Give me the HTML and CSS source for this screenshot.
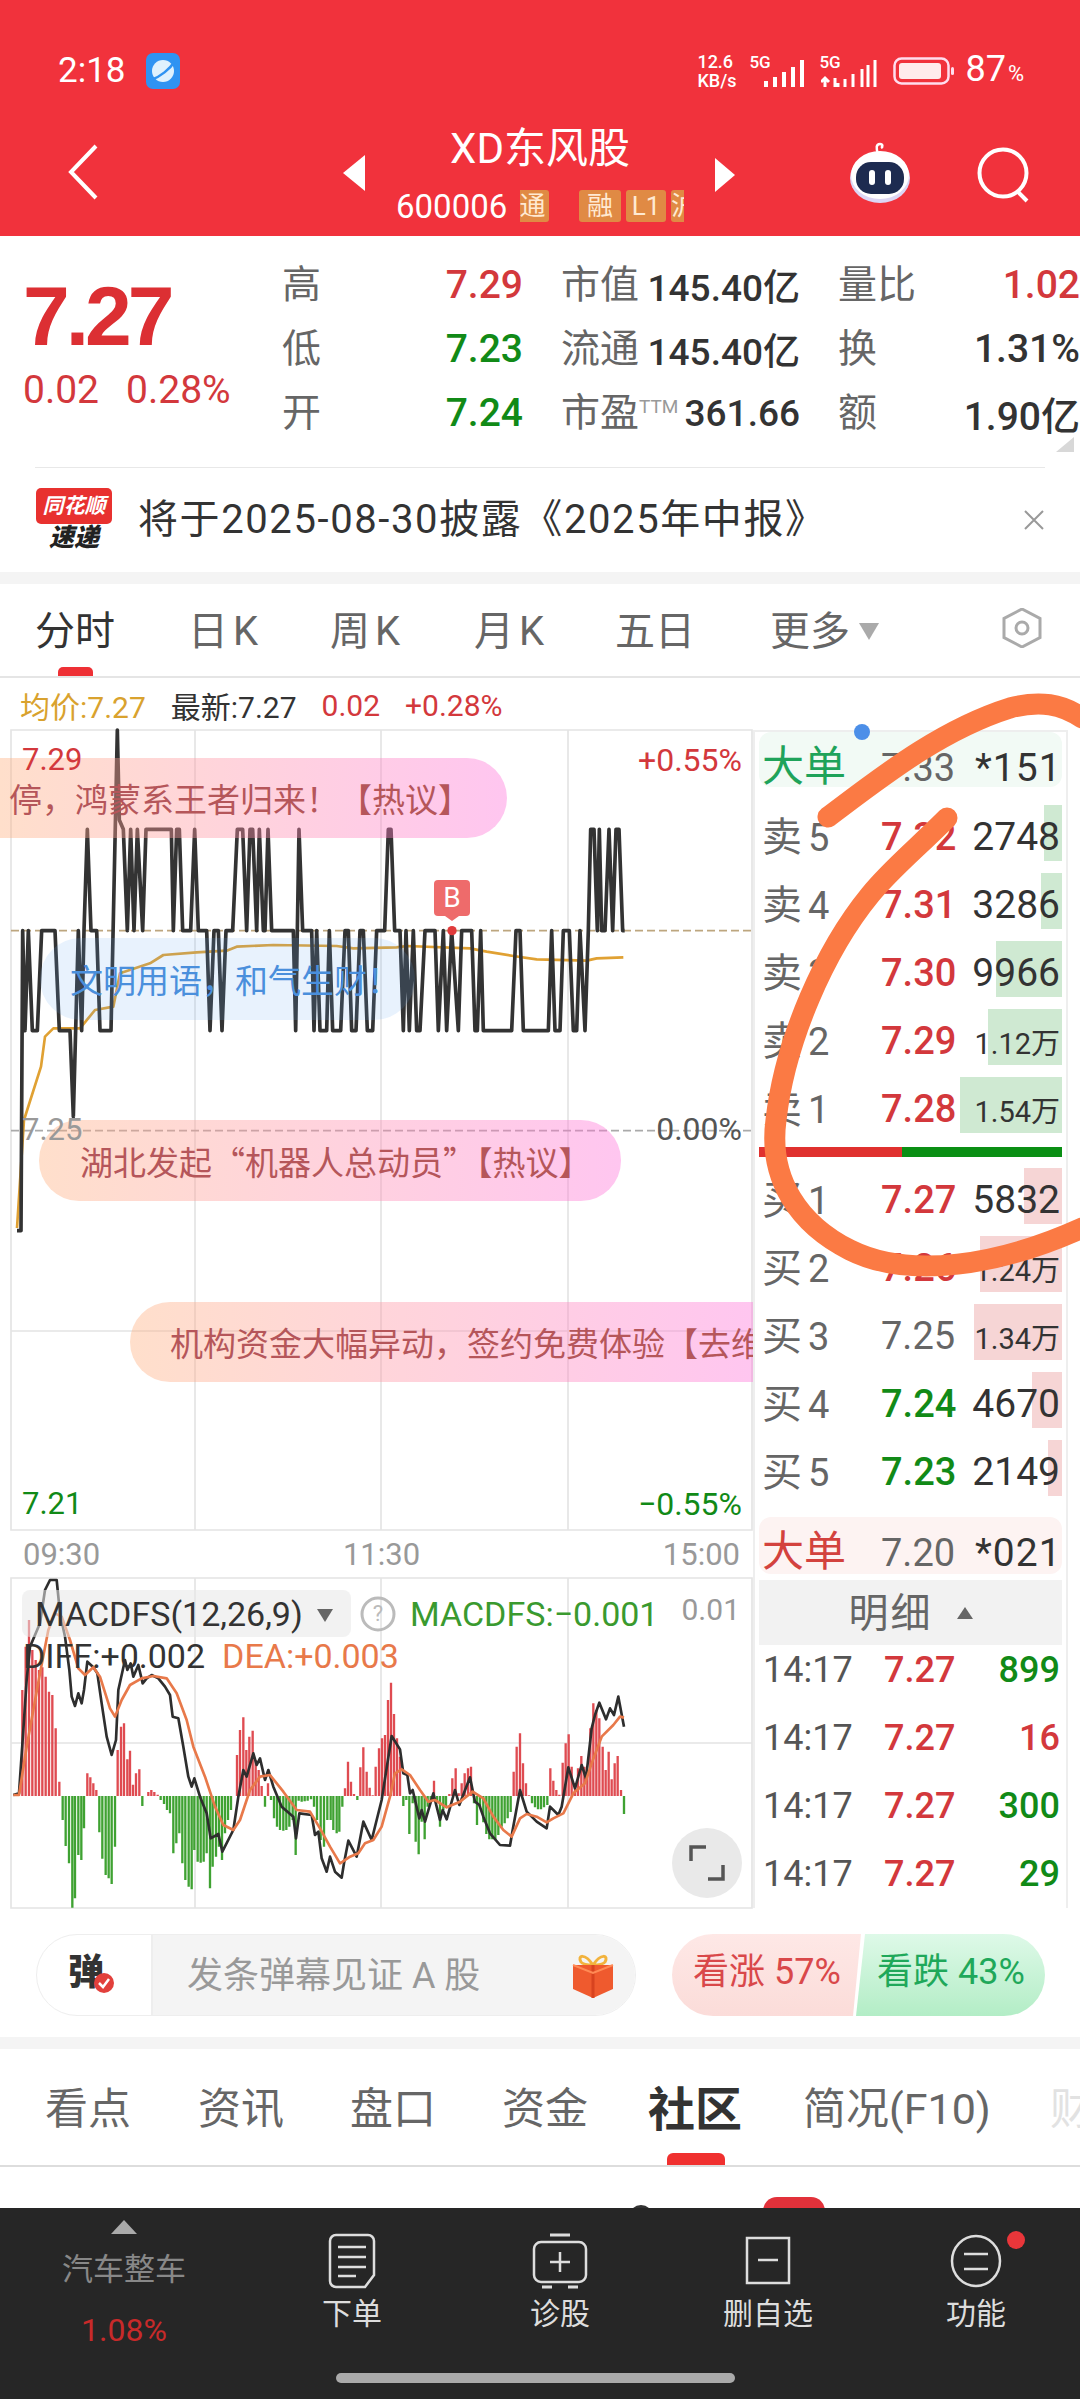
FILE: index.html
```html
<!DOCTYPE html>
<html lang="zh-CN">
<head>
    <meta charset="UTF-8">
    <title>XD东风股</title>
    <link rel="stylesheet" href="styles.css">
</head>
<body>
<div class="page">

    <div class="top">
        <div class="status">
            <span class="clock">2:18</span>
            <svg class="app-dot" width="34" height="36" viewBox="0 0 34 36"><rect width="34" height="36" rx="7" fill="#2f93f2"/><circle cx="17" cy="18" r="11" fill="#dff1fd"/><path d="M5 27 C14 24 24 16 29 8" stroke="#2f93f2" stroke-width="2.5" fill="none"/></svg>
            <div class="status-right">
                <span class="net">12.6<br>KB/s</span>
                <span class="sim"><span class="sim-g">5G</span><svg width="44" height="28" viewBox="0 0 44 28"><path d="M3 28V22M12 28V18M21 28V13M30 28V8M39 28V1" stroke="#fff" stroke-width="4"/></svg></span>
                <span class="sim sim-two"><span class="sim-g">5G</span><svg width="58" height="28" viewBox="0 0 58 28"><path d="M4 28V20M0 23L4 19L8 23M14 19V28M17 28V24M24 28V20M32 28V15M41 28V10M47 28V6M54 28V1" stroke="#fff" stroke-width="3" fill="none"/></svg></span>
                <svg class="battery" width="62" height="28" viewBox="0 0 62 28"><rect x="1.5" y="1.5" width="54" height="25" rx="7" fill="none" stroke="#fde" stroke-width="2.5"/><rect x="6" y="6" width="42" height="16" rx="3" fill="#ffecec"/><rect x="58" y="10" width="3" height="8" rx="1.5" fill="#fde"/></svg>
                <span class="pct">87<small>%</small></span>
            </div>
        </div>
        <div class="nav">
            <svg class="back" width="30" height="56" viewBox="0 0 30 56"><path d="M28 2L3 28L28 54" fill="none" stroke="#fff" stroke-width="4"/></svg>
            <span class="tri-left"></span>
            <div class="nav-center">
                <div class="title">XD东风股</div>
                <div class="sub">
                    <span class="code">600006</span>
                    <span class="tag tag-tong"><span>通</span></span>
                    <span class="tag tag-rong">融</span>
                    <span class="tag tag-l1">L1</span>
                    <span class="tag tag-cut">沪</span>
                </div>
            </div>
            <span class="tri-right"></span>
            <svg class="robot" width="64" height="62" viewBox="0 0 64 62"><path d="M30 12C28 6 28 2 32 2C35 2 35 5 33 6" fill="none" stroke="#fff" stroke-width="2.5"/><ellipse cx="32" cy="36" rx="30" ry="25" fill="#dcd6f5"/><ellipse cx="32" cy="33" rx="29" ry="24" fill="#fff"/><rect x="8" y="20" width="48" height="32" rx="15" fill="#1d2b50"/><rect x="21" y="28" width="6" height="15" rx="3" fill="#fff"/><rect x="37" y="28" width="6" height="15" rx="3" fill="#fff"/></svg>
            <svg class="search" width="54" height="56" viewBox="0 0 54 56"><circle cx="26" cy="26" r="23.5" fill="none" stroke="#fff" stroke-width="4"/><path d="M40 44L50 54" stroke="#fff" stroke-width="4"/></svg>
        </div>
    </div>

    <div class="quote">
        <div class="now">
            <div class="now-price">7.27</div>
            <div class="now-change"><span>0.02</span><span>0.28%</span></div>
        </div>
        <div class="stats">
            <div class="stat"><span class="k">高</span><span class="v up">7.29</span></div>
            <div class="stat"><span class="k">市值</span><span class="m">145.40亿</span></div>
            <div class="stat"><span class="k">量比</span><span class="v up">1.02</span></div>
            <div class="stat"><span class="k">低</span><span class="v down">7.23</span></div>
            <div class="stat"><span class="k">流通</span><span class="m">145.40亿</span></div>
            <div class="stat"><span class="k">换</span><span class="m wide">1.31%</span></div>
            <div class="stat"><span class="k">开</span><span class="v down">7.24</span></div>
            <div class="stat"><span class="k">市盈<sup>TTM</sup></span><span class="m">361.66</span></div>
            <div class="stat"><span class="k">额</span><span class="m wide">1.90亿</span></div>
        </div>
        <span class="corner"></span>
    </div>

    <div class="news">
        <div class="news-logo">
            <div class="news-bubble">同花顺</div>
            <div class="news-word">速递</div>
        </div>
        <div class="news-text">将于2025-08-30披露《2025年中报》</div>
        <svg class="news-close" width="22" height="22" viewBox="0 0 22 22"><path d="M2 2L20 20M20 2L2 20" stroke="#999" stroke-width="2"/></svg>
    </div>

    <div class="gap"></div>

    <div class="periods">
        <span class="period on">分时</span>
        <span class="period">日 K</span>
        <span class="period">周 K</span>
        <span class="period">月 K</span>
        <span class="period">五日</span>
        <span class="period">更多<i class="more-tri"></i></span>
        <svg class="hex" width="42" height="40" viewBox="0 0 42 40"><path d="M21 1L39 10.5V29.5L21 39L3 29.5V10.5Z" fill="none" stroke="#aaa" stroke-width="3"/><circle cx="21" cy="20" r="6" fill="none" stroke="#aaa" stroke-width="3"/></svg>
        <i class="period-bar"></i>
    </div>

    <div class="legend">
        <span class="avg">均价:7.27</span>
        <span class="last">最新:7.27</span>
        <span class="up">0.02</span>
        <span class="up">+0.28%</span>
    </div>

    <div class="board">
        <div class="chart-col">
            <div class="price-chart">
                <svg class="plot" width="743" height="800" viewBox="0 -270 2229 2400">
                    <g class="grid">
                        <path d="M3 -270V2130H2226V-270ZM555 -270V2130M1113 -270V2130M1674 -270V2130M3 1533H2226"/>
                    </g>
                    <path class="mid-dash" d="M3 332H2226"/>
                    <path class="zero-dash" d="M3 932H2226"/>
                    <polyline class="avg-line" points="21,1224 42,900 93,740 105,650 130,625 210,625 255,570 310,560 320,510 330,460 420,430 460,405 560,397 650,392 680,380 790,375 980,378 1030,385 1160,382 1190,378 1380,385 1430,395 1510,408 1580,418 1730,422 1760,415 1840,412"/>
                    <polyline class="price-line" points="21,1232 33,1232 38,332 45,632 55,332 67,632 82,632 95,332 135,332 148,632 180,632 190,890 205,332 215,632 222,332 232,28 243,332 260,332 270,632 303,632 322,-270 328,0 340,28 352,332 362,28 372,332 382,28 398,332 408,28 484,28 490,332 500,28 508,28 518,332 542,332 554,28 565,332 590,332 600,632 612,332 625,332 636,632 648,332 668,332 682,28 698,28 710,332 720,28 728,28 740,332 748,28 760,332 765,332 774,28 785,332 850,332 857,632 862,332 867,28 878,332 905,332 912,632 920,332 930,632 950,632 958,332 968,632 992,632 1005,332 1015,332 1025,632 1038,632 1050,332 1060,332 1072,632 1088,632 1100,332 1124,332 1135,28 1143,28 1154,332 1170,332 1180,632 1188,332 1198,632 1210,332 1220,632 1230,632 1245,332 1275,332 1285,632 1300,332 1310,632 1325,332 1345,632 1355,332 1385,332 1395,632 1402,632 1412,332 1420,632 1505,632 1518,332 1530,332 1540,632 1615,632 1625,332 1635,632 1650,632 1660,332 1678,332 1690,632 1700,632 1710,332 1725,632 1735,332 1742,28 1752,28 1762,332 1768,28 1775,332 1785,332 1797,28 1808,332 1818,28 1827,28 1838,332 1844,332"/>
                    <circle cx="1326" cy="332" r="14" fill="#e03b3b"/>
                </svg>
                <div class="pill pill-one"><span>停，鸿蒙系王者归来！【热议】</span></div>
                <div class="pill pill-blue"><span>文明用语，和气生财！</span></div>
                <div class="pill pill-three"><span>湖北发起“机器人总动员”【热议】</span></div>
                <div class="pill pill-four"><span>机构资金大幅异动，签约免费体验【去维</span></div>
                <span class="axis-num num-high">7.29</span>
                <span class="axis-num num-pct-high">+0.55%</span>
                <span class="axis-num num-mid">7.25</span>
                <span class="axis-num num-pct-mid">0.00%</span>
                <span class="axis-num num-low">7.21</span>
                <span class="axis-num num-pct-low">−0.55%</span>
                <span class="trade-mark">B</span>
            </div>
            <div class="times"><span>09:30</span><span>11:30</span><span>15:00</span></div>
            <div class="macd">
                <svg class="plot" width="743" height="332" viewBox="0 -6 2229 996">
                    <g class="grid">
                        <path d="M3 -6V984H2226V-6ZM555 -6V984M1113 -6V984M1674 -6V984M3 489H2226"/>
                    </g>
                    <path class="bars-red" d="M37 648V330M47 648V200M57 648V120M67 648V210M77 648V240M87 648V270M97 648V262M107 648V290M117 648V335M127 648V345M137 648V445M148 648V605M232 648V580M241 648V592M250 648V610M259 648V630M323 648V510M333 648V440M342 648V430M352 648V538M360 648V512M369 648V614M378 648V580M388 648V568M415 648V636M424 648V630M433 648V636M443 648V644M681 648V525M690 648V450M700 648V412M709 648V510M718 648V470M728 648V452M737 648V540M746 648V570M755 648V618M774 648V610"/>
                    <path class="bars-green" d="M158 648V720M167 648V798M177 648V850M187 648V983M195 648V955M205 648V825M214 648V840M222 648V745M268 648V757M277 648V836M287 648V885M296 648V895M305 648V912M315 648V800M397 648V678M452 648V660M462 648V672M471 648V690M480 648V700M490 648V820M499 648V790M508 648V760M517 648V850M526 648V900M536 648V920M545 648V928M553 648V810M563 648V845M572 648V848M581 648V845M590 648V820M600 648V925M608 648V860M618 648V830M627 648V800M636 648V840M645 648V760M654 648V720M663 648V690M765 648V680M783 648V660M792 648V715M801 648V740M810 648V750M820 648V752M829 648V750M838 648V740M848 648V720M857 648V825M866 648V662M875 648V665M884 648V664M893 648V662M903 648V658M912 648V680M921 648V720"/>
                    <g transform="translate(930,210)">
                        <path class="bars-red" d="M75 438V415M84 438V335M93 438V395M102 438V432M121 438V352M130 438V292M140 438V365M149 438V413M158 438V436M167 438V350M177 438V295M186 438V265M195 438V255M204 438V150M213 438V98M222 438V192M231 438V265M240 438V320M342 438V392M388 438V432M397 438V385M407 438V355M416 438V430M425 438V400M434 438V370M444 438V355M453 438V350M581 438V365M590 438V290M600 438V250M609 438V340M618 438V400M627 438V436M691 438V355M700 438V392M709 438V420M718 438V434M728 438V338M737 438V280M746 438V253M755 438V350M765 438V400M774 438V355M784 438V318M793 438V350M802 438V370M811 438V235M820 438V160M829 438V180M838 438V205M848 438V290M857 438V360M866 438V305M875 438V388M884 438V340M893 438V318M903 438V420"/>
                        <path class="bars-green" d="M2 438V570M12 438V590M22 438V510M32 438V510M40 438V540M50 438V550M58 438V545M67 438V470M112 438V450M250 438V468M259 438V450M268 438V552M278 438V460M287 438V575M296 438V613M305 438V515M314 438V568M323 438V470M332 438V450M351 438V460M360 438V530M370 438V480M378 438V470M462 438V460M471 438V525M480 438V470M490 438V517M499 438V552M508 438V568M517 438V568M526 438V570M535 438V555M545 438V530M554 438V520M563 438V505M572 438V486M636 438V460M645 438V472M654 438V478M663 438V478M672 438V472M682 438V465M912 438V492"/>
                    </g>
                    <polyline class="diff-line" points="10,645 27,640 40,450 50,300 60,200 90,130 105,30 120,0 140,0 150,100 165,170 178,270 185,350 195,378 205,340 215,370 222,330 232,245 250,262 262,280 275,370 290,470 305,525 318,480 325,330 345,240 352,270 362,250 370,290 385,255 398,310 410,295 425,285 445,295 465,320 480,345 488,410 505,415 520,500 535,590 545,620 553,595 570,650 590,700 602,775 625,762 637,815 670,750 685,650 700,570 710,590 730,520 740,555 750,535 765,600 775,570 790,620 815,680 850,710 858,775 868,700 905,705 915,765 925,755 935,835 950,875 960,830 975,875 995,893 1002,850 1015,782 1040,830 1060,725 1085,780 1100,720 1115,660 1145,468 1170,508 1180,580 1192,585 1200,640 1208,630 1228,715 1235,690 1245,725 1270,640 1290,720 1298,690 1310,718 1335,630 1348,675 1380,592 1395,665 1408,675 1420,710 1440,760 1470,795 1500,797 1508,750 1530,630 1550,695 1580,725 1610,745 1620,680 1645,705 1655,680 1675,562 1695,625 1715,555 1728,595 1745,445 1755,405 1768,368 1788,418 1800,385 1812,405 1825,350 1842,440"/>
                    <polyline class="dea-line" points="10,645 27,645 50,500 90,280 115,150 135,100 155,110 180,180 205,265 225,285 250,262 270,290 300,385 315,410 335,360 360,315 395,295 430,288 470,295 500,340 530,420 550,500 585,590 615,680 640,735 670,750 690,720 720,630 750,590 780,585 820,635 860,690 900,695 930,745 960,800 990,850 998,845 1020,830 1045,820 1065,790 1090,780 1115,740 1140,650 1155,580 1175,568 1200,585 1230,630 1255,665 1275,660 1310,682 1350,665 1388,635 1420,655 1450,710 1480,750 1505,770 1530,715 1550,702 1580,710 1610,727 1630,715 1660,700 1690,640 1725,610 1745,550 1775,470 1810,435 1830,410 1842,413"/>
                </svg>
                <div class="macd-chip">MACDFS(12,26,9)<i class="chip-tri"></i></div>
                <svg class="help" width="36" height="36" viewBox="0 0 36 36"><circle cx="18" cy="18" r="16" fill="none" stroke="#bbb" stroke-width="3"/><text x="18" y="25" text-anchor="middle" font-size="22" fill="#bbb" font-family="Roboto">?</text></svg>
                <span class="macd-val">MACDFS:−0.001</span>
                <span class="macd-scale">0.01</span>
                <div class="macd-lines"><span class="diff">DIFF:+0.002</span><span class="dea">DEA:+0.003</span></div>
                <div class="expand">
                    <svg width="36" height="36" viewBox="0 0 36 36"><path d="M2 16V2H17M34 20V34H19" fill="none" stroke="#555" stroke-width="3.5"/></svg>
                </div>
            </div>
        </div>

        <div class="book">
            <div class="big-row big-buy"><span class="big-name">大单</span><span class="price flat">7.33</span><span class="big-vol">*151</span><i class="blue-dot"></i></div>
            <div class="side sell">
                <div class="row"><i class="bar" style="width:18px"></i><span class="row-name"><b>卖</b>5</span><span class="price up">7.32</span><span class="vol">2748</span></div>
                <div class="row"><i class="bar" style="width:21px"></i><span class="row-name"><b>卖</b>4</span><span class="price up">7.31</span><span class="vol">3286</span></div>
                <div class="row"><i class="bar" style="width:66px"></i><span class="row-name"><b>卖</b>3</span><span class="price up">7.30</span><span class="vol">9966</span></div>
                <div class="row"><i class="bar" style="width:74px"></i><span class="row-name"><b>卖</b>2</span><span class="price up">7.29</span><span class="vol small">1.12万</span></div>
                <div class="row"><i class="bar" style="width:102px"></i><span class="row-name"><b>卖</b>1</span><span class="price up">7.28</span><span class="vol small">1.54万</span></div>
            </div>
            <div class="split"><i class="split-red"></i><i class="split-green"></i></div>
            <div class="side buy">
                <div class="row"><i class="bar" style="width:38px"></i><span class="row-name"><b>买</b>1</span><span class="price up">7.27</span><span class="vol">5832</span></div>
                <div class="row"><i class="bar" style="width:82px"></i><span class="row-name"><b>买</b>2</span><span class="price up">7.26</span><span class="vol small">1.24万</span></div>
                <div class="row"><i class="bar" style="width:88px"></i><span class="row-name"><b>买</b>3</span><span class="price flat">7.25</span><span class="vol small">1.34万</span></div>
                <div class="row"><i class="bar" style="width:30px"></i><span class="row-name"><b>买</b>4</span><span class="price down">7.24</span><span class="vol">4670</span></div>
                <div class="row"><i class="bar" style="width:14px"></i><span class="row-name"><b>买</b>5</span><span class="price down">7.23</span><span class="vol">2149</span></div>
            </div>
            <div class="big-row big-sell"><span class="big-name">大单</span><span class="price flat">7.20</span><span class="big-vol">*021</span></div>
            <div class="detail-head">明细<i class="detail-tri"></i></div>
            <div class="trades">
                <div class="trade"><span class="t-time">14:17</span><span class="t-price">7.27</span><span class="t-vol down">899</span></div>
                <div class="trade"><span class="t-time">14:17</span><span class="t-price">7.27</span><span class="t-vol up">16</span></div>
                <div class="trade"><span class="t-time">14:17</span><span class="t-price">7.27</span><span class="t-vol down">300</span></div>
                <div class="trade"><span class="t-time">14:17</span><span class="t-price">7.27</span><span class="t-vol down">29</span></div>
            </div>
        </div>
    </div>

    <div class="danmu-row">
        <div class="danmu">
            <div class="danmu-badge"><b>弹</b>
                <svg class="danmu-check" width="20" height="20" viewBox="0 0 20 20"><circle cx="10" cy="10" r="10" fill="#e2403c"/><path d="M5 10L9 14L15 6" fill="none" stroke="#fff" stroke-width="2.5"/></svg>
            </div>
            <div class="danmu-input">
                <span>发条弹幕见证 A 股</span>
                <svg width="44" height="48" viewBox="0 0 44 48"><path d="M22 14C14 2 6 4 10 11C12 14 18 14 22 14C26 14 32 14 34 11C38 4 30 2 22 14Z" fill="none" stroke="#f2b33d" stroke-width="3"/><path d="M2 14H42V38L22 47L2 38Z" fill="#ef5a2e"/><path d="M22 14V47" stroke="#d8431f" stroke-width="3"/><path d="M2 14L22 22L42 14" fill="none" stroke="#ff8a55" stroke-width="2"/></svg>
            </div>
        </div>
        <div class="vote">
            <span class="vote-up">看涨 57%</span>
            <span class="vote-down">看跌 43%</span>
        </div>
    </div>

    <div class="gap"></div>

    <div class="tabs">
        <span class="tab">看点</span>
        <span class="tab">资讯</span>
        <span class="tab">盘口</span>
        <span class="tab">资金</span>
        <span class="tab on">社区</span>
        <span class="tab">简况(F10)</span>
        <span class="tab faded">财</span>
        <i class="tab-bar"></i>
    </div>

    <div class="feed">
        <i class="feed-dot"></i>
        <i class="feed-badge"></i>
    </div>

    <div class="dock">
        <div class="dock-sector">
            <i class="dock-tri"></i>
            <span class="sector-name">汽车整车</span>
            <span class="sector-pct">1.08%</span>
        </div>
        <div class="dock-item">
            <svg width="48" height="56" viewBox="0 0 48 56"><path d="M8 2H40A6 6 0 0 1 46 8V42L37 54H8A6 6 0 0 1 2 48V8A6 6 0 0 1 8 2Z" fill="none" stroke="#ddd" stroke-width="2.5"/><path d="M10 14H38M10 24H38M10 34H38M10 43H28" stroke="#ddd" stroke-width="2.5"/></svg>
            <span>下单</span>
        </div>
        <div class="dock-item">
            <svg width="56" height="56" viewBox="0 0 56 56"><path d="M18 2H38" stroke="#ddd" stroke-width="3"/><rect x="2" y="9" width="52" height="40" rx="7" fill="none" stroke="#ddd" stroke-width="2.5"/><path d="M28 19V39M18 29H38" stroke="#ddd" stroke-width="2.5"/><path d="M10 54H20M36 54H46" stroke="#ddd" stroke-width="3"/></svg>
            <span>诊股</span>
        </div>
        <div class="dock-item">
            <svg width="46" height="56" viewBox="0 0 46 56"><rect x="2" y="5" width="42" height="45" fill="none" stroke="#ddd" stroke-width="2.5"/><path d="M13 27H33" stroke="#ddd" stroke-width="2.5"/></svg>
            <span>删自选</span>
        </div>
        <div class="dock-item">
            <svg width="52" height="56" viewBox="0 0 52 56"><ellipse cx="26" cy="28" rx="24" ry="25" fill="none" stroke="#ddd" stroke-width="2.5"/><path d="M14 21H38M14 36H38" stroke="#ddd" stroke-width="2.5"/></svg>
            <span>功能</span>
            <i class="dock-dot"></i>
        </div>
        <i class="home-bar"></i>
    </div>

    <svg class="scribble" width="1080" height="800" viewBox="0 600 1080 800">
        <path d="M828 817C880 778 940 730 1010 708C1040 700 1062 704 1082 718"/>
        <path d="M947 818C915 850 890 870 870 895C825 950 785 1040 776 1120C768 1180 800 1225 850 1250C910 1280 1000 1265 1082 1228"/>
    </svg>
</div>
</body>
</html>
```

FILE: styles.css
```css
*{box-sizing:border-box;}
html,body{margin:0;padding:0;background:#fff;}
body{font-family:Roboto,"Noto Sans CJK SC",sans-serif;color:#333;}
i{display:block;font-style:normal;}
.page{width:1080px;height:2400px;position:relative;overflow:hidden;}
.up{color:#d3383c;}
.down{color:#118a17;}
.flat{color:#666;}
.gap{height:12px;background:#f4f4f4;}

/* red head */
.top{height:236px;background:#f1323c;color:#fff;}
.status{display:flex;align-items:center;height:92px;padding:50px 58px 0;}
.clock{font-size:35px;line-height:42px;}
.app-dot{margin-left:20px;}
.status-right{margin-left:auto;display:flex;align-items:center;}
.net{font-size:18px;line-height:19px;font-weight:500;width:50px;}
.sim{display:flex;align-items:flex-end;height:32px;position:relative;width:58px;margin-left:2px;}
.sim svg{position:absolute;right:0;bottom:0;}
.sim-g{position:absolute;left:0;top:-2px;font-size:17px;line-height:18px;font-weight:500;}
.sim-two{width:60px;margin-left:12px;}
.battery{margin-left:14px;}
.pct{font-size:36px;line-height:40px;margin-left:10px;margin-right:-2px;}
.pct small{font-size:22px;margin-left:2px;}
.nav{display:flex;height:144px;}
.back{margin:52px 0 0 68px;}
.tri-left{width:0;height:0;margin:63px 0 0 245px;border:solid transparent;border-width:18px 22px 18px 0;border-right-color:#fff;}
.nav-center{width:350px;}
.title{font-size:42px;line-height:46px;text-align:center;margin-top:34px;}
.sub{display:flex;align-items:center;height:34px;margin-top:17px;padding-left:31px;}
.code{font-size:33px;width:124px;}
.tag{display:block;height:32px;line-height:32px;font-size:26px;background:#e08a44;color:#ffe9d2;text-align:center;border-radius:3px;overflow:hidden;}
.tag-tong{width:29px;border-radius:0 3px 3px 0;}
.tag-tong span{display:block;margin-left:-4px;}
.tag-rong{width:42px;margin-left:30px;}
.tag-l1{width:40px;margin-left:5px;}
.tag-cut{width:13px;margin-left:5px;border-radius:3px 0 0 3px;text-align:left;}
.tri-right{width:0;height:0;margin:66px 0 0 0;border:solid transparent;border-width:17px 0 17px 20px;border-left-color:#fff;}
.robot{margin:50px 0 0 113px;}
.search{margin:55px 0 0 65px;}

/* quote */
.quote{display:flex;height:231px;position:relative;}
.now{width:282px;padding:40px 0 0 23px;}
.now-price{font-family:"Liberation Sans",sans-serif;font-size:84px;line-height:80px;font-weight:700;color:#dc2f33;letter-spacing:-4px;}
.now-change{display:flex;font-size:39px;line-height:46px;color:#d3383c;margin-top:11px;gap:27px;}
.stats{display:grid;grid-template-columns:241px 239px 242px;column-gap:38px;grid-auto-rows:64px;padding-top:17px;}
.stat{display:flex;justify-content:space-between;align-items:center;}
.k{font-size:39px;color:#666;white-space:nowrap;padding-bottom:8px;}
.k sup{font-size:19px;vertical-align:13px;line-height:0;color:#999;}
.v{font-size:39px;font-weight:500;}
.m{font-size:37px;font-weight:500;color:#333;white-space:nowrap;}
.m.wide{font-size:39px;}
.corner{position:absolute;right:6px;top:201px;width:18px;height:15px;background:#d8d8d8;clip-path:polygon(100% 0,100% 100%,0 100%);}

.news{display:flex;align-items:center;height:105px;padding:0 36px;position:relative;}
.news::before{content:"";position:absolute;left:35px;right:35px;top:0;height:1px;background:#e8e8e8;}
.news-logo{width:76px;text-align:center;}
.news-bubble{height:36px;line-height:36px;background:#e8312f;color:#fff;font-size:21px;font-weight:700;font-style:italic;border-radius:5px;white-space:nowrap;}
.news-word{font-size:25px;line-height:28px;font-weight:900;font-style:italic;color:#222;}
.news-text{margin-left:26px;padding-bottom:8px;font-size:40px;letter-spacing:1.6px;color:#333;white-space:nowrap;}
.news-close{margin-left:auto;margin-right:-1px;}

/* period tabs */
.periods{display:grid;grid-template-columns:153px 142px 144px 141px 155px 231px auto;align-items:center;height:94px;padding:0 0 4px 35px;border-bottom:2px solid #e5e5e5;position:relative;word-spacing:-5px;}
.period{font-size:40px;color:#666;display:flex;align-items:center;white-space:nowrap;}
.period.on{color:#333;}
.more-tri{width:0;height:0;margin:6px 0 0 9px;border:solid transparent;border-width:17px 10px 0;border-top-color:#aaa;}
.period-bar{position:absolute;left:58px;bottom:0;width:35px;height:9px;background:#ee3035;border-radius:5px 5px 0 0;}
.legend{display:flex;align-items:center;height:52px;padding:2px 0 0 20px;font-size:30px;gap:25px;white-space:nowrap;}
.avg{color:#d9a22e;}
.last{color:#333;}

/* chart */
.board{display:flex;height:1178px;}
.chart-col{width:753px;padding-left:10px;}
.price-chart{width:743px;height:800px;position:relative;}
.plot{display:block;overflow:visible;}
.grid path{fill:none;stroke:#e4e4e4;stroke-width:5;}
.mid-dash{fill:none;stroke:#bda67f;stroke-width:5;stroke-dasharray:24 12;}
.zero-dash{fill:none;stroke:#aaa;stroke-width:5;stroke-dasharray:24 12;}
.price-line{fill:none;stroke:#333;stroke-width:11;stroke-linejoin:round;}
.avg-line{fill:none;stroke:#e0a133;stroke-width:8;stroke-linejoin:round;}
.pill{position:absolute;height:80px;display:flex;align-items:center;font-family:"Noto Sans CJK SC",sans-serif;font-size:33px;color:#b5565a;white-space:nowrap;overflow:hidden;background:linear-gradient(90deg,rgba(255,175,125,.4),rgba(255,112,217,.4));border-radius:40px;}
.pill-one{left:-10px;top:28px;width:507px;justify-content:flex-end;padding-right:36px;border-radius:0 40px 40px 0;}
.pill-blue{left:30px;top:208px;width:375px;padding-left:30px;color:#4a8fdc;background:rgba(100,167,240,.15);height:82px;border-radius:41px;}
.pill-three{left:29px;top:390px;width:582px;padding-left:41px;height:81px;}
.pill-four{left:120px;top:572px;width:623px;padding-left:40px;border-radius:40px 0 0 40px;}
.axis-num{position:absolute;font-size:31px;line-height:36px;white-space:nowrap;}
.num-high{left:12px;top:12px;color:#d3383c;}
.num-pct-high{right:11px;top:12px;color:#d3383c;font-size:32px;}
.num-mid{left:12px;top:382px;color:#999;}
.num-pct-mid{right:11px;top:381px;color:#555;font-size:32px;}
.num-low{left:12px;top:756px;color:#118a17;}
.num-pct-low{right:11px;top:756px;color:#118a17;font-size:32px;}
.trade-mark{position:absolute;left:424px;top:150px;width:36px;height:36px;line-height:36px;text-align:center;background:#ee6b6b;color:#fff;font-size:28px;border-radius:4px;}
.trade-mark::after{content:"";position:absolute;left:11px;top:36px;border:solid transparent;border-width:5px 7px 0;border-top-color:#ee6b6b;}
.times{display:flex;justify-content:space-between;align-items:center;height:48px;padding:0 13px;font-size:31px;color:#999;}

.macd{width:743px;height:332px;position:relative;}
.bars-red{fill:none;stroke:#df4b51;stroke-width:7;}
.bars-green{fill:none;stroke:#3fa232;stroke-width:7;}
.diff-line{fill:none;stroke:#2e2e2e;stroke-width:8;stroke-linejoin:round;}
.dea-line{fill:none;stroke:#e8794a;stroke-width:8;stroke-linejoin:round;}
.macd-chip{position:absolute;left:12px;top:12px;width:329px;height:47px;display:flex;align-items:center;padding-left:13px;font-size:34px;color:#333;background:rgba(232,232,232,.55);border-radius:8px;white-space:nowrap;}
.chip-tri{width:0;height:0;margin:4px 0 0 14px;border:solid transparent;border-width:13px 8px 0;border-top-color:#666;}
.help{position:absolute;left:350px;top:18px;}
.macd-val{position:absolute;left:400px;top:16px;font-size:34px;line-height:40px;color:#3a9a2f;white-space:nowrap;}
.macd-scale{position:absolute;right:13px;top:14px;font-size:30px;line-height:36px;color:#999;}
.macd-lines{position:absolute;left:13px;top:58px;display:flex;gap:17px;font-size:34px;line-height:40px;white-space:nowrap;}
.diff{color:#333;}
.dea{color:#e8794a;}
.expand{position:absolute;left:662px;top:250px;width:70px;height:70px;border-radius:50%;background:#e9e9e9;display:flex;align-items:center;justify-content:center;}

/* order book */
.book{width:315px;height:1178px;border:solid #eee;border-width:2px 2px 0;padding-left:4px;}
.big-row{display:grid;grid-template-columns:119px 94px 1fr;align-items:center;height:55px;border-radius:12px;padding-left:3px;position:relative;width:303px;white-space:nowrap;}
.big-buy{background:#f2faf5;margin-bottom:18px;}
.big-buy .big-name{color:#1fa35a;}
.big-sell{background:#fdf3f2;height:57px;margin-top:21px;}
.big-sell .big-name{color:#d3423e;}
.big-name{font-size:42px;padding-bottom:10px;}
.big-vol{font-size:39px;letter-spacing:1px;color:#333;}
.blue-dot{position:absolute;left:95px;top:-8px;width:16px;height:16px;border-radius:50%;background:#4c8fe8;}
.side{display:flex;flex-direction:column;gap:12px;width:303px;}
.row{display:grid;grid-template-columns:119px 74px 1fr;align-items:center;height:56px;position:relative;padding-left:3px;}
.bar{position:absolute;right:0;top:0;bottom:0;}
.sell .bar{background:#cfe9d2;}
.buy .bar{background:#f6d5d5;}
.row-name{font-size:38px;color:#666;position:relative;white-space:nowrap;padding-bottom:5px;}
.row-name b{font-weight:400;font-size:40px;margin-right:6px;}
.price{font-size:38px;position:relative;}
.price.up,.price.down{font-weight:500;}
.vol{font-size:39px;color:#333;text-align:right;padding-right:2px;position:relative;}
.vol.small{font-size:29px;}
.split{display:flex;width:303px;height:10px;margin:14px 0 11px;}
.split-red{width:143px;background:#e0312f;}
.split-green{flex:1;background:#0a8f14;}
.detail-head{display:flex;align-items:center;justify-content:center;width:303px;height:65px;margin-top:6px;background:#f2f2f2;font-size:40px;color:#666;letter-spacing:2px;padding-bottom:6px;}
.detail-tri{width:0;height:0;margin:6px 0 0 24px;border:solid transparent;border-width:0 8px 12px;border-bottom-color:#666;}
.trades{display:flex;flex-direction:column;gap:22px;width:303px;margin-top:2px;}
.trade{display:grid;grid-template-columns:121px 72px 1fr;align-items:center;height:46px;padding-left:4px;font-size:36px;}
.t-time{color:#555;}
.t-price{color:#d3383c;font-weight:500;}
.t-vol{text-align:right;font-weight:500;padding-right:2px;}

/* danmaku line */
.danmu-row{display:flex;height:129px;padding:26px 35px 21px 36px;gap:36px;}
.danmu{display:flex;width:600px;height:82px;border:1px solid #eee;border-radius:41px;overflow:hidden;}
.danmu-badge{width:114px;position:relative;padding-left:31px;line-height:76px;font-size:36px;color:#333;flex:none;}
.danmu-badge b{font-weight:900;}
.danmu-check{position:absolute;left:57px;top:38px;}
.danmu-input{flex:1;display:flex;align-items:center;justify-content:space-between;background:#f4f4f4;padding:0 20px 0 34px;font-size:36px;color:#999;border-left:2px solid #eee;white-space:nowrap;}
.danmu-input span{padding-bottom:6px;}
.vote{display:flex;width:373px;height:82px;font-size:36px;line-height:76px;white-space:nowrap;}
.vote-up{width:189px;padding-left:21px;color:#d9484a;background:linear-gradient(180deg,#fee8e6,#fbdcd9);border-radius:41px 0 0 41px;clip-path:polygon(0 0,100% 0,calc(100% - 8px) 100%,0 100%);}
.vote-down{width:189px;margin-left:-5px;padding-left:21px;color:#1fa85a;background:linear-gradient(180deg,#def9e8,#b3edc6);border-radius:0 41px 41px 0;clip-path:polygon(9px 0,100% 0,100% 100%,0 100%);}

/* bottom tabs */
.tabs{display:grid;grid-template-columns:153px 152px 152px 146px 155px 247px auto;align-items:center;height:118px;padding:0 0 4px 45px;border-bottom:2px solid #ddd;position:relative;overflow:hidden;}
.tab{font-size:43px;color:#666;white-space:nowrap;}
.tab.on{font-size:47px;font-weight:700;color:#333;}
.tab.faded{color:#e2e2e2;}
.tab-bar{position:absolute;left:667px;bottom:0;width:58px;height:12px;background:#f0302f;border-radius:6px 6px 0 0;}
.feed{height:41px;position:relative;overflow:hidden;}
.feed-dot{position:absolute;left:629px;top:38px;width:24px;height:24px;border-radius:50%;background:#333;}
.feed-badge{position:absolute;left:763px;top:30px;width:62px;height:30px;border-radius:14px;background:#e2313a;}

.dock{display:grid;grid-template-columns:248px repeat(4,208px);height:191px;background:#262626;position:relative;}
.dock-sector{display:flex;flex-direction:column;align-items:center;padding-top:12px;}
.dock-tri{width:0;height:0;border:solid transparent;border-width:0 13px 14px;border-bottom-color:#aaa;}
.sector-name{font-size:31px;line-height:40px;color:#888;margin-top:16px;}
.sector-pct{font-size:32px;line-height:40px;color:#c82a2a;margin-top:20px;}
.dock-item{display:flex;flex-direction:column;align-items:center;padding-top:25px;font-size:30px;line-height:40px;color:#ddd;position:relative;}
.dock-item span{margin-top:5px;}
.dock-dot{position:absolute;left:135px;top:23px;width:18px;height:18px;border-radius:50%;background:#e9363a;}
.home-bar{position:absolute;left:336px;bottom:16px;width:399px;height:10px;border-radius:5px;background:#aaa;}

.scribble{position:absolute;left:0;top:600px;pointer-events:none;}
.scribble path{fill:none;stroke:#fb7a44;stroke-width:21;stroke-linecap:round;}
```
